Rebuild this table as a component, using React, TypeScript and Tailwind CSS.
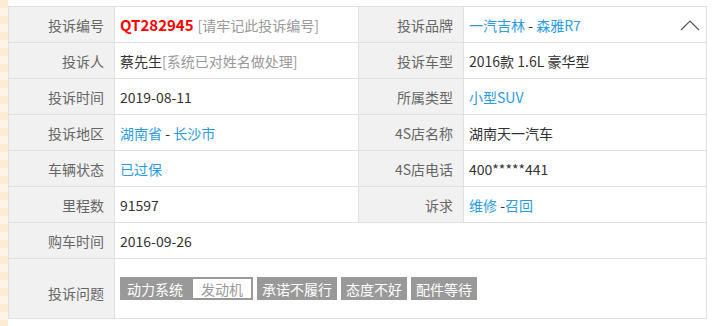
import React from 'react';

const label = "bg-[#f1f1f1] text-[#666] text-right pr-[10px] border border-[#e0e0e0]";
const value = "text-[#333] pl-[5px] border border-[#e0e0e0]";
const link = "text-[#2b9be6]";

export default function App() {
  return (
    <div className="flex w-[715px] h-[326px] bg-white overflow-hidden" style={{ fontFamily: '"Noto Sans CJK SC", "Microsoft YaHei", sans-serif' }}>
      <div className="w-[8px] h-full bg-[repeating-linear-gradient(180deg,#fbecd3_0px,#fbecd3_8px,#fdf3e6_8px,#fdf3e6_16px)]" />
      <div className="pt-[6px]">
        <table className="border-collapse w-[699px] text-[14px] leading-none">
          <colgroup>
            <col className="w-[106px]" />
            <col className="w-[244px]" />
            <col className="w-[105px]" />
            <col />
          </colgroup>
          <tbody>
            <tr className="h-[36px]">
              <td className={label}>投诉编号</td>
              <td className={value}>
                <span className="text-[#f00] font-bold text-[15px]">QT282945</span>
                <span className="text-[#999] ml-[4px]">[请牢记此投诉编号]</span>
              </td>
              <td className={label}>投诉品牌</td>
              <td className={value}>
                <div className="flex items-center justify-between pr-[6px]">
                  <span><span className={link}>一汽吉林</span> - <span className={link}>森雅R7</span></span>
                  <svg width="20" height="12" viewBox="0 0 20 12" fill="none" stroke="#555" strokeWidth="1.2">
                    <path d="M1 11 L10 2 L19 11" />
                  </svg>
                </div>
              </td>
            </tr>
            <tr className="h-[36px]">
              <td className={label}>投诉人</td>
              <td className={value}>蔡先生<span className="text-[#999]">[系统已对姓名做处理]</span></td>
              <td className={label}>投诉车型</td>
              <td className={value}>2016款 1.6L 豪华型</td>
            </tr>
            <tr className="h-[36px]">
              <td className={label}>投诉时间</td>
              <td className={value}>2019-08-11</td>
              <td className={label}>所属类型</td>
              <td className={value}><span className={link}>小型SUV</span></td>
            </tr>
            <tr className="h-[36px]">
              <td className={label}>投诉地区</td>
              <td className={value}><span className={link}>湖南省</span> - <span className={link}>长沙市</span></td>
              <td className={label}>4S店名称</td>
              <td className={value}>湖南天一汽车</td>
            </tr>
            <tr className="h-[36px]">
              <td className={label}>车辆状态</td>
              <td className={value}><span className={link}>已过保</span></td>
              <td className={label}>4S店电话</td>
              <td className={value}>400*****441</td>
            </tr>
            <tr className="h-[36px]">
              <td className={label}>里程数</td>
              <td className={value}>91597</td>
              <td className={label}>诉求</td>
              <td className={value}><span className={link}>维修</span> -<span className={link}>召回</span></td>
            </tr>
            <tr className="h-[36px]">
              <td className={label}>购车时间</td>
              <td className={value} colSpan={3}>2016-09-26</td>
            </tr>
            <tr className="h-[60px]">
              <td className={label}><div className="pt-[8px]">投诉问题</div></td>
              <td className={value} colSpan={3}>
                <div className="flex gap-[4px] text-white">
                  <span className="flex items-center bg-[#999] h-[23px] pl-[7px] pr-[2px]">
                    动力系统
                    <span className="ml-[10px] bg-white text-[#999] h-[19px] px-[8px] flex items-center">发动机</span>
                  </span>
                  <span className="flex items-center bg-[#999] h-[23px] px-[5px]">承诺不履行</span>
                  <span className="flex items-center bg-[#999] h-[23px] px-[5px]">态度不好</span>
                  <span className="flex items-center bg-[#999] h-[23px] px-[5px]">配件等待</span>
                </div>
              </td>
            </tr>
          </tbody>
        </table>
      </div>
    </div>
  );
}
